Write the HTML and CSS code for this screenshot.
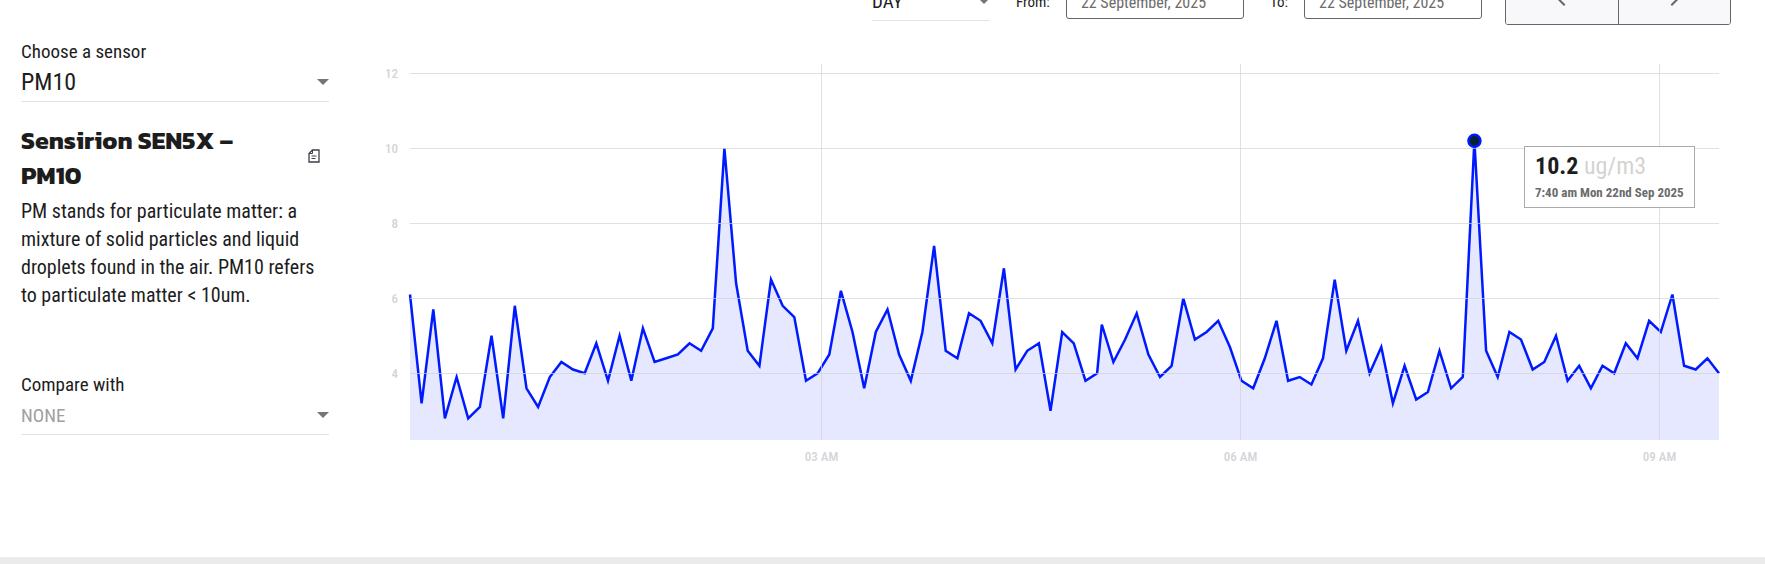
FILE: index.html
```
<!DOCTYPE html>
<html lang="en">
<head>
    <title>Sensor readings</title>
    <meta charset="UTF-8">
    <meta name="viewport" content="width=device-width, initial-scale=1.0">
    <link rel="stylesheet" href="styles.css">
</head>
<body>
    <form class="toolbar">
        <div class="select select-day">
            <select id="rollup" aria-label="Rollup">
                <option>DAY</option>
            </select>
        </div>
        <div class="date-field">
            <label for="from">From:</label>
            <input type="text" id="from" value="22 September, 2025">
        </div>
        <div class="date-field">
            <label for="to">To:</label>
            <input type="text" id="to" value="22 September, 2025">
        </div>
        <div class="button-group">
            <button type="button" aria-label="Previous">
                <svg width="24" height="24" viewBox="0 0 24 24"><path d="M15.4 7.4 14 6l-6 6 6 6 1.4-1.4L10.8 12z"/></svg>
            </button>
            <button type="button" aria-label="Next">
                <svg width="24" height="24" viewBox="0 0 24 24"><path d="M10 6 8.6 7.4l4.6 4.6-4.6 4.6L10 18l6-6z"/></svg>
            </button>
        </div>
    </form>

    <main class="content">
        <aside class="sidebar">
            <label for="sensor">Choose a sensor</label>
            <div class="select select-large">
                <select id="sensor">
                    <option>PM10</option>
                </select>
            </div>

            <div class="sensor-heading">
                <h2>Sensirion SEN5X – PM10</h2>
                <button type="button" class="copy-button" aria-label="Datasheet">
                    <svg width="12" height="14" viewBox="0 0 12 14" fill="none" stroke="#3c3f49">
                        <path d="M4.5 1H11v12H1V4.5z" stroke-width="1.3"/>
                        <path d="M4.5 1v3.5H1M3.5 7h5M3.5 9.5h4"/>
                    </svg>
                </button>
            </div>
            <p>PM stands for particulate matter: a mixture of solid particles and liquid droplets found in the air. PM10 refers to particulate matter &lt; 10um.</p>

            <label for="compare">Compare with</label>
            <div class="select select-muted">
                <select id="compare">
                    <option>NONE</option>
                </select>
            </div>
        </aside>

        <section class="chart" id="chart">
            <svg id="plot" role="img" aria-label="PM10 readings"></svg>
            <div class="tooltip" id="tooltip">
                <div class="reading"><strong>10.2</strong> <span>ug/m3</span></div>
                <div class="time">7:40 am Mon 22nd Sep 2025</div>
            </div>
        </section>
    </main>

    <footer class="footer"></footer>

    <script src="script.js"></script>
</body>
</html>
```
FILE: styles.css
```
* {
    box-sizing: border-box;
}
body {
    margin: 0;
    min-height: 100vh;
    display: flex;
    flex-direction: column;
    overflow: hidden;
    background-color: #fff;
    color: #1d1d1d;
    font-family: "Roboto Condensed", "Liberation Sans Narrow", Roboto, sans-serif;
    font-size: 19px;
    line-height: 28px;
}
select, input, button {
    font-family: inherit;
    color: inherit;
    margin: 0;
}

/* Toolbar, scrolled halfway out of the window */
.toolbar {
    display: flex;
    justify-content: flex-end;
    align-items: center;
    height: 50px;
    margin-top: -25px;
    padding-right: 34px;
}
.date-field {
    display: flex;
    align-items: center;
    margin-left: 26px;
    font-size: 15px;
}
.date-field label {
    margin-right: 16px;
    padding-top: 4px;
}
.date-field input {
    width: 178px;
    height: 38px;
    padding: 4px 14px 0;
    border: 1px solid #666;
    border-radius: 3px;
    background-color: #fff;
    color: #6b6b6b;
    font-size: 16px;
}
.button-group {
    display: flex;
    width: 226px;
    height: 50px;
    margin-left: 23px;
    border: 1px solid #666;
    border-radius: 3px;
    overflow: hidden;
}
.button-group button {
    flex: 1;
    display: flex;
    align-items: center;
    justify-content: center;
    padding: 0;
    border: none;
    background-color: #f8f8fb;
    fill: #666;
}
.button-group button + button {
    border-left: 1px solid #666;
}

/* Underlined drop-downs */
.select {
    position: relative;
    border-bottom: 1px solid #e3e3e3;
}
.select::after {
    content: "";
    position: absolute;
    right: 0;
    top: 13px;
    border: 6px solid transparent;
    border-top-color: #757575;
    border-bottom: none;
    pointer-events: none;
}
.select select {
    display: block;
    width: 100%;
    height: 35px;
    padding: 0 0 2px;
    border: none;
    appearance: none;
    background: none;
    font-size: 19px;
}
.select-day {
    width: 118px;
    margin-top: 6px;
}
.select-large select {
    padding-bottom: 4px;
    font-size: 24px;
}
.select-muted select {
    color: #a0a0a0;
}

.content {
    display: flex;
    flex: 1;
    padding: 13px 34px 0 21px;
}
.sidebar {
    width: 308px;
    margin-right: 51px;
}
.sidebar label {
    display: block;
}
.sensor-heading {
    display: flex;
    align-items: center;
    justify-content: space-between;
    margin-top: 21px;
}
.sensor-heading h2 {
    width: 230px;
    margin: 0;
    font-family: Kanit, Inter, sans-serif;
    font-size: 25px;
    font-weight: 700;
    line-height: 35px;
}
.copy-button {
    display: flex;
    padding: 0;
    margin: 0 9px 4px 0;
    border: none;
    background: none;
}
.sidebar p {
    margin: 4px 0 62px;
    padding-right: 10px;
    font-size: 20px;
}

.chart {
    position: relative;
    flex: 1;
    min-width: 0;
    margin-top: 26px;
}
.chart svg {
    display: block;
    width: 100%;
    height: 410px;
}
.chart .grid {
    stroke: #d3d3d3;
    stroke-opacity: 0.7;
}
.chart .line {
    fill: none;
    stroke: #001aff;
    stroke-width: 2.5px;
}
.chart .area {
    fill: #001aff;
    fill-opacity: 0.1;
}
.chart .marker {
    fill: #06232f;
    stroke: #001aff;
    stroke-width: 2.5px;
}
.chart text {
    fill: #d3d5d8;
    font-size: 13px;
    font-weight: 500;
}
.tooltip {
    position: absolute;
    padding: 4px 10px 3px;
    border: 1px solid #aaa;
    background-color: #fff;
    white-space: nowrap;
}
.tooltip .reading {
    font-size: 24px;
    line-height: 30px;
}
.tooltip .reading span {
    color: #d3d3d3;
}
.tooltip .time {
    color: #6b6b6b;
    font-size: 13px;
    font-weight: bold;
    line-height: 23px;
}
.footer {
    height: 7px;
    background-color: #ebebec;
}
```
FILE: script.js
```
// One reading every five minutes, the sensor restarted after the first block
const before = [6.1, 3.2, 5.7, 2.8, 3.9, 2.8, 3.1, 5.0, 2.8, 5.8, 3.6, 3.1, 3.9, 4.3, 4.1,
    4.0, 4.8, 3.8, 5.0, 3.8, 5.2, 4.3, 4.4, 4.5, 4.8, 4.6, 5.2, 10, 6.4, 4.6, 4.2, 6.5, 5.8,
    5.5, 3.8, 4.0, 4.5, 6.2, 5.1, 3.6, 5.1, 5.7, 4.5, 3.8, 5.1, 7.4, 4.6, 4.4, 5.6, 5.4, 4.8,
    6.8, 4.1, 4.6, 4.8, 3.0, 5.1, 4.8, 3.8, 4.0];
const after = [5.3, 4.3, 4.9, 5.6, 4.5, 3.9, 4.2, 6.0, 4.9, 5.1, 5.4, 4.7, 3.8, 3.6, 4.4,
    5.4, 3.8, 3.9, 3.7, 4.4, 6.5, 4.6, 5.4, 4.0, 4.7, 3.2, 4.2, 3.3, 3.5, 4.6, 3.6, 3.9, 10.2,
    4.6, 3.9, 5.1, 4.9, 4.1, 4.3, 5.0, 3.8, 4.2, 3.6, 4.2, 4.0, 4.8, 4.4, 5.4, 5.1, 6.1, 4.2,
    4.1, 4.4, 4.0];
const points = before.map((v, i) => [3.5 + i * 5, v])
    .concat(after.map((v, i) => [300.5 + i * 5, v]));

const margin = { left: 30, right: 12 };
const plotHeight = 376;
const minValue = 2.22;
const maxValue = 12.25;

function draw() {
    const svg = document.getElementById('plot');
    const tooltip = document.getElementById('tooltip');
    const width = svg.clientWidth;
    const right = width - margin.right;
    const first = points[0][0];
    const last = points[points.length - 1][0];
    const x = t => margin.left + (t - first) / (last - first) * (right - margin.left);
    const y = v => plotHeight * (maxValue - v) / (maxValue - minValue);

    const line = points.map(p => x(p[0]).toFixed(1) + ',' + y(p[1]).toFixed(1)).join(' ');
    let html = `<polygon class="area" points="${margin.left},${plotHeight} ${line} ${right},${plotHeight}"/>`;
    html += `<polyline class="line" points="${line}"/>`;

    [4, 6, 8, 10, 12].forEach(v => {
        const gy = Math.floor(y(v)) + 0.5;
        html += `<line class="grid" x1="${margin.left}" x2="${right}" y1="${gy}" y2="${gy}"/>`;
        html += `<text x="${margin.left - 12}" y="${gy + 4}" text-anchor="end">${v}</text>`;
    });
    [3, 6, 9].forEach(h => {
        const gx = Math.floor(x(h * 60)) + 0.5;
        html += `<line class="grid" x1="${gx}" x2="${gx}" y1="0" y2="${plotHeight}"/>`;
        html += `<text x="${gx}" y="${plotHeight + 21}" text-anchor="middle">0${h} AM</text>`;
    });

    const peak = points.find(p => p[1] === 10.2);
    html += `<circle class="marker" cx="${x(peak[0])}" cy="${y(peak[1])}" r="6"/>`;
    svg.setAttribute('viewBox', `0 0 ${width} 410`);
    svg.innerHTML = html;

    tooltip.style.left = Math.round(x(peak[0]) + 50) + 'px';
    tooltip.style.top = Math.round(y(peak[1]) + 5) + 'px';
}

draw();
window.addEventListener('resize', draw);
```
